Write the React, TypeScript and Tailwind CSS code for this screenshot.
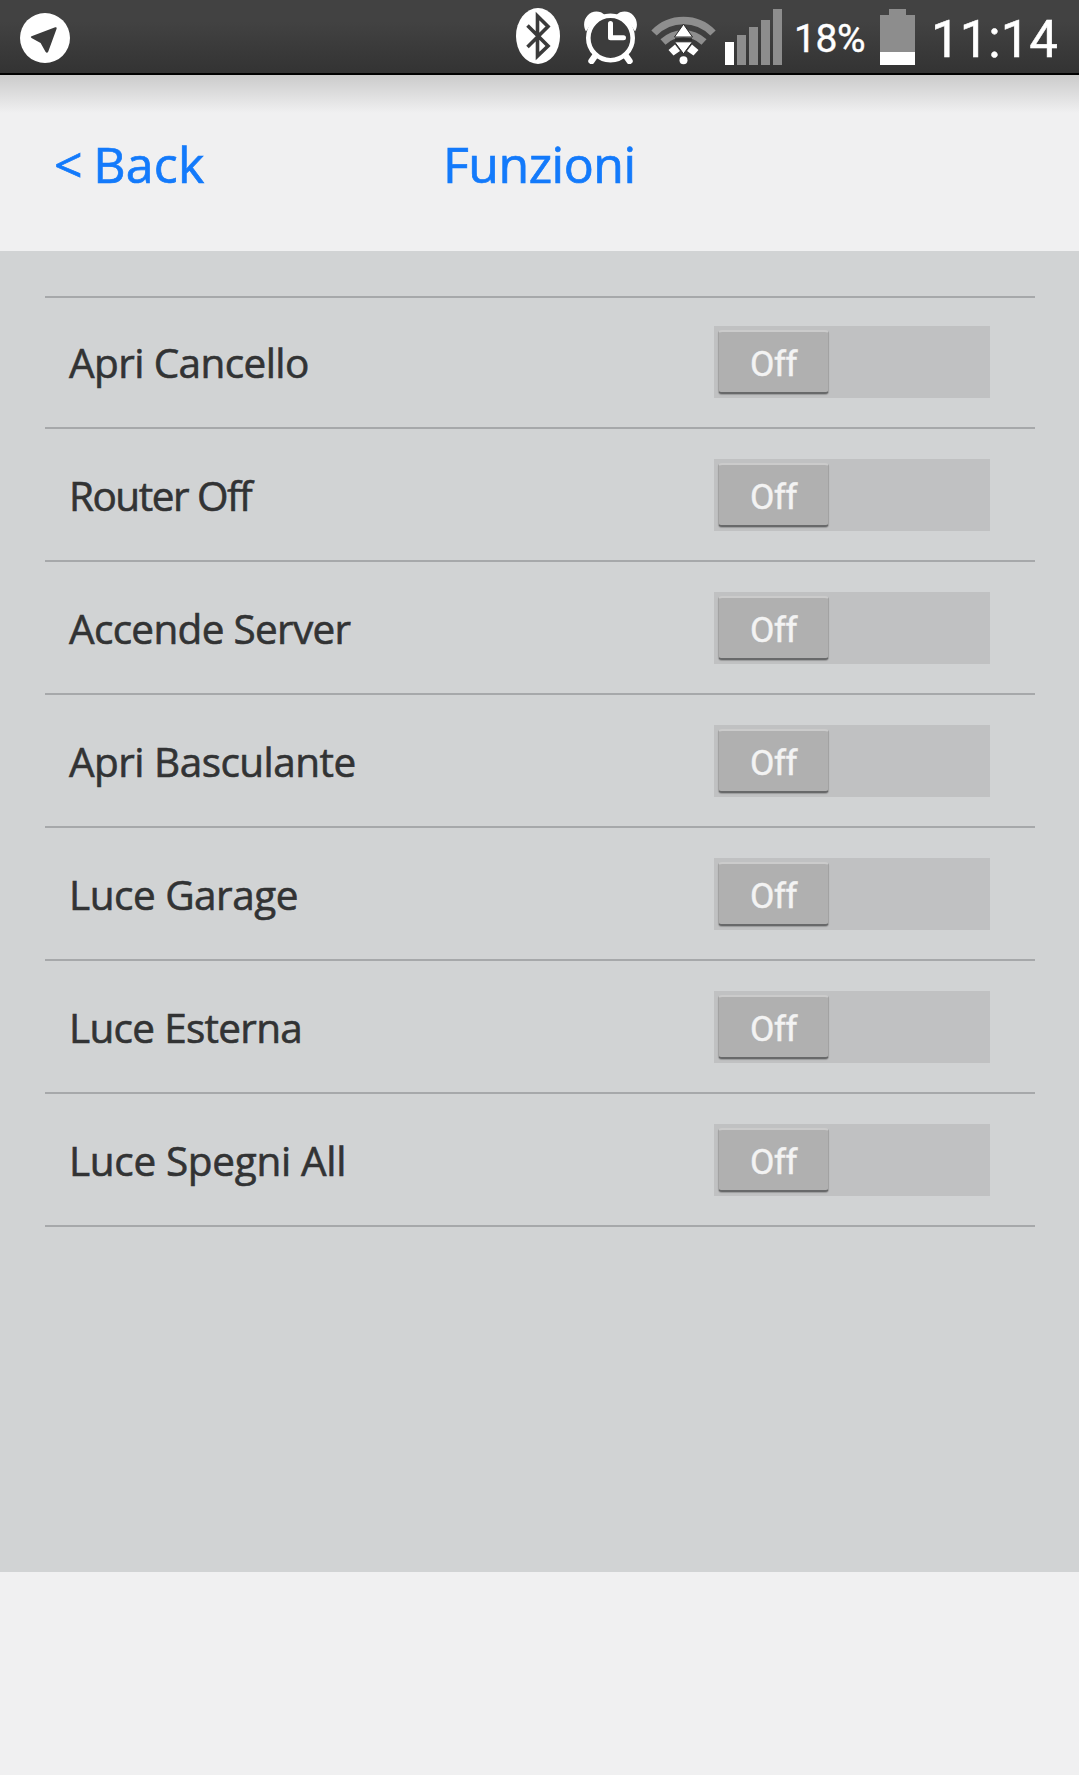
// src/App.tsx
import { useState } from "react"

interface Funzione {
  label: string
  textClass: string
}

const FUNZIONI: Funzione[] = [
  { label: "Apri Cancello", textClass: "tracking-[-0.6px]" },
  { label: "Router Off", textClass: "tracking-[-1.5px]" },
  { label: "Accende Server", textClass: "tracking-[-0.69px]" },
  { label: "Apri Basculante", textClass: "tracking-[-0.53px]" },
  { label: "Luce Garage", textClass: "tracking-[-0.5px]" },
  { label: "Luce Esterna", textClass: "tracking-[-0.7px]" },
  { label: "Luce Spegni All", textClass: "tracking-[-0.33px]" },
]

function LocationIcon() {
  return (
    <svg className="ml-5 mt-[13px] h-[50px] w-[50px]" viewBox="0 0 50 50">
      <circle cx="25" cy="25" r="25" fill="#fff" />
      <path d="M11.5 23.2 L35.2 14.3 Q37.2 13.6 36.6 15.8 L28.3 38.6 Q27 41 25.5 38.8 L20.6 30 L11.5 25 Q10 24 11.5 23.2Z" fill="#3b3b3b" />
    </svg>
  )
}

function BluetoothIcon() {
  return (
    <svg className="mt-2 h-14 w-11" viewBox="0 0 44 56">
      <ellipse cx="22" cy="28" rx="22" ry="28" fill="#fff" />
      <path d="M11.5 17.5 L32 38 L21.5 48 V8 L32 18.5 L11.5 39" fill="none" stroke="#3b3b3b" strokeWidth="3.6" />
    </svg>
  )
}

function AlarmIcon() {
  return (
    <svg className="ml-[23px] mt-[11px] h-[53px] w-[55px]" viewBox="0 0 55 53">
      <path d="M3 20.5 C-3 10 6 -3 18 1.2 L22 4 Q10 8 3 20.5Z M52 20.5 C58 10 49 -3 37 1.2 L33 4 Q45 8 52 20.5Z" fill="#fff" />
      <circle cx="27.5" cy="27" r="22.2" fill="#3c3c3c" stroke="#fff" strokeWidth="4.6" />
      <path d="M27.5 12.5 V26.8 H40.5" fill="none" stroke="#fff" strokeWidth="5" strokeLinecap="round" strokeLinejoin="round" />
      <path d="M12 45 L8.5 50 M43 45 L46.5 50" stroke="#fff" strokeWidth="6.4" strokeLinecap="round" />
    </svg>
  )
}

function WifiIcon() {
  return (
    <svg className="ml-[13px] mt-3 h-[53px] w-[66px]" viewBox="0 0 66 53">
      <path d="M3 21 A41 41 0 0 1 62 21" fill="none" stroke="#8e8e8e" strokeWidth="7.4" />
      <path d="M12 30 A30 30 0 0 1 53 30" fill="none" stroke="#8e8e8e" strokeWidth="7.4" />
      <path d="M24 32.5 L29 39 L22.5 43.5 L17.5 38Z M41 32.5 L36 39 L42.5 43.5 L47.5 38Z" fill="#fff" />
      <circle cx="32.5" cy="48.2" r="4" fill="#fff" />
      <path d="M32.5 12.2 L41.5 25 H23.5Z M32.5 41.8 L41.5 29.8 H23.5Z" fill="#fff" stroke="#2b2b2b" strokeWidth="1" />
      <path d="M24 27.4 H41" stroke="#2b2b2b" strokeWidth="2.4" />
    </svg>
  )
}

function SignalBars() {
  return (
    <div className="ml-2 mt-[9px] flex h-14 items-end gap-[3px]">
      <span className="h-[23px] w-[9px] bg-white" />
      <span className="h-[30px] w-[9px] bg-[#8d8d8d]" />
      <span className="h-[38px] w-[9px] bg-[#8d8d8d]" />
      <span className="h-[45px] w-[9px] bg-[#8d8d8d]" />
      <span className="h-14 w-[9px] bg-[#8d8d8d]" />
    </div>
  )
}

function Battery() {
  return (
    <div className="mt-[9px] flex h-14 w-[35px] flex-col items-center">
      <span className="h-1.5 w-[17px] bg-[#8d8d8d]" />
      <span className="h-[37px] w-full bg-[#8d8d8d]" />
      <span className="h-[13px] w-full bg-white" />
    </div>
  )
}

function StatusBar() {
  return (
    <div className="flex h-[75px] items-start justify-between border-b-2 border-black bg-linear-to-b from-[#424242] from-30% to-[#333333] font-[Roboto,sans-serif] text-white">
      <LocationIcon />
      <div className="flex items-start">
        <BluetoothIcon />
        <AlarmIcon />
        <WifiIcon />
        <SignalBars />
        <span className="ml-3 mt-4 w-[86px] text-[39px] leading-[46px] tracking-[-0.4px] [-webkit-text-stroke:0.4px]">18%</span>
        <Battery />
        <span className="ml-4 mt-[10px] w-[148px] text-[51px] leading-[60px] [-webkit-text-stroke:0.5px]">11:14</span>
      </div>
    </div>
  )
}

function Header() {
  return (
    <header className="flex h-44 bg-linear-to-b from-[#cbcbcb] to-[#f0f0f1] to-[38px] text-[50px] leading-[68px] text-[#137afb] [-webkit-text-stroke:0.7px]">
      <button className="ml-[54px] mt-[55px] h-[68px] w-[389px] whitespace-pre text-left tracking-[0.3px] [word-spacing:-3px]">{"< Back"}</button>
      <h1 className="mt-[55px] tracking-[-0.5px]">Funzioni</h1>
    </header>
  )
}

function Toggle() {
  const [on, setOn] = useState(false)

  return (
    <button
      role="switch"
      aria-checked={on}
      onClick={() => setOn(!on)}
      className={`flex h-[72px] w-[276px] items-start bg-[#c0c1c2] p-1 font-[Roboto,sans-serif] ${on ? "justify-end" : "justify-start"}`}
    >
      <span className="h-16 w-[111px] rounded-[4px] border border-t-2 border-t-[#cbcbcb] border-r-[#a2a2a2] border-b-2 border-b-[#68696a] border-l-[#a2a2a2] bg-[#b0b0b0] text-center text-[35.5px] leading-[64px] tracking-[-0.7px] text-[#f3f3f3] shadow-[0_1px_1px_rgba(0,0,0,0.2)] [-webkit-text-stroke:0.4px]">
        {on ? "On" : "Off"}
      </span>
    </button>
  )
}

export default function App() {
  return (
    <div className="min-h-[1775px] w-[1079px] bg-[#f0f0f1] font-['Open_Sans','Noto_Sans',sans-serif]">
      <StatusBar />
      <Header />

      <main className="h-[1321px] bg-[#d1d3d4] pt-[45px] pr-[44px] pl-[45px]">
        <ul className="w-[990px] border-t-2 border-[#a6a8aa]">
          {FUNZIONI.map(f => (
            <li
              key={f.label}
              className="flex h-[133px] items-end justify-between border-b-2 border-[#a6a8aa] pr-[45px] pb-[29px] pl-6 first:h-[131px]"
            >
              <span className={`mb-[7px] text-[40.5px] leading-[56px] text-[#323334] [-webkit-text-stroke:0.6px] ${f.textClass}`}>{f.label}</span>
              <Toggle />
            </li>
          ))}
        </ul>
      </main>
    </div>
  )
}
